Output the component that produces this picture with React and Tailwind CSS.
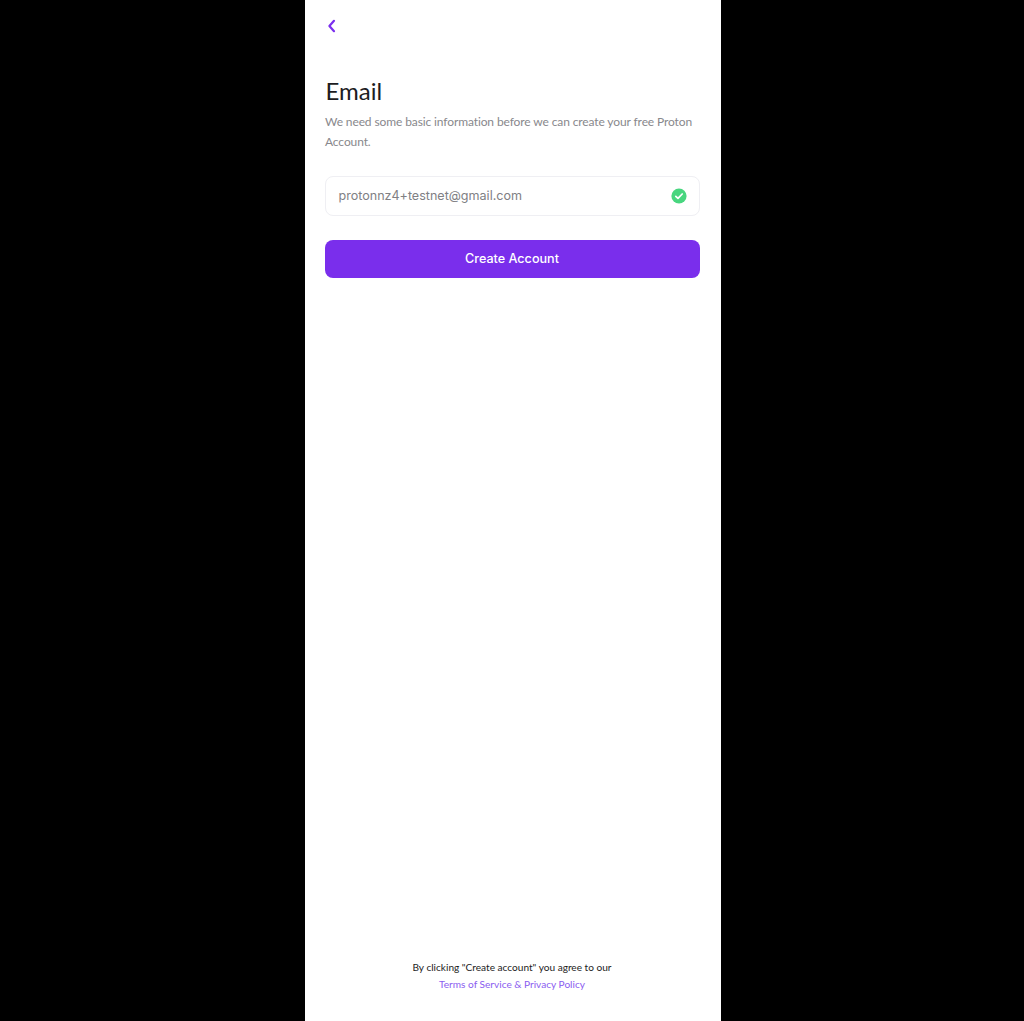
import React from "react";

export default function App() {
  return (
    <div className="flex h-[1021px] w-full justify-center overflow-hidden bg-black">
      <div className="ml-[1px] flex h-full w-[416px] flex-col bg-white pr-[21px] pl-5 font-['Lato',sans-serif]">
        <div className="h-[52px] pt-[18px]">
          <svg width="12" height="16" viewBox="0 0 12 16" fill="none">
            <path d="M9 2.8 L4.4 8 L9 13.2" stroke="#7b2fee" strokeWidth="2.2" strokeLinecap="round" strokeLinejoin="round" />
          </svg>
        </div>
        <h1 className="mt-[21px] h-[36px] pl-[1px] text-[24px] leading-[36px] font-normal text-[#1c1c22]">Email</h1>
        <p className="mt-[3px] pl-[0.5px] text-[12px] leading-[20px] tracking-[-0.11px] text-[#88888c]">
          We need some basic information before we can create your free Proton Account.
        </p>
        <div className="mt-[24px] flex h-[40px] items-center justify-between rounded-lg border border-[#efeff3] pr-[11.5px] pl-[13px]">
          <span className="font-['Inter',sans-serif] text-[12.55px] text-[#808084]">protonnz4+testnet@gmail.com</span>
          <svg width="16" height="16" viewBox="0 0 16 16">
            <circle cx="8" cy="8" r="7.6" fill="#48d67f" />
            <path d="M4.8 8.3 L7 10.4 L11.2 6" stroke="#fff" strokeWidth="1.7" fill="none" strokeLinecap="round" strokeLinejoin="round" />
          </svg>
        </div>
        <button className="mt-[24px] flex h-[38px] w-full items-center justify-center rounded-lg bg-[#7a2eec] font-['Inter',sans-serif] text-[12.6px] font-medium text-white">
          Create Account
        </button>
        <div className="mt-auto mb-[28px] text-center text-[10.1px] leading-[17px]">
          <p className="text-[#1c1c22]">By clicking "Create account" you agree to our</p>
          <p className="text-[#8a5cf0]">Terms of Service &amp; Privacy Policy</p>
        </div>
      </div>
    </div>
  );
}
